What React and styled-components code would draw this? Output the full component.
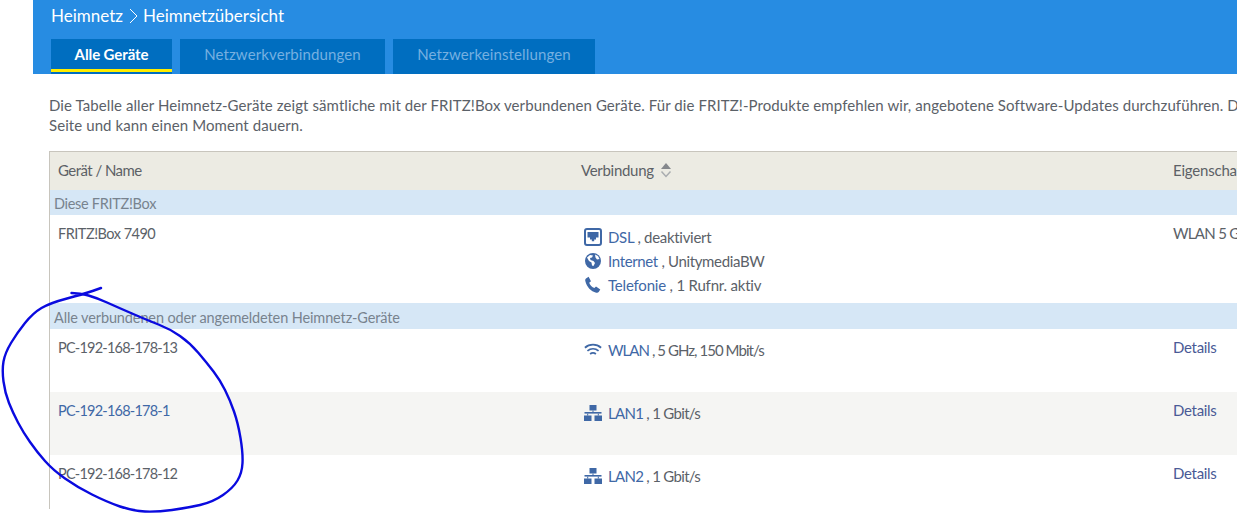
import React from 'react';
import styled, { createGlobalStyle } from 'styled-components';

const GlobalStyle = createGlobalStyle`
  html, body {
    margin: 0;
    padding: 0;
    background: #fff;
    overflow: hidden;
  }
`;

const Page = styled.div`
  position: relative;
  width: 1237px;
  height: 513px;
  overflow: hidden;
  padding-left: 33px;
  box-sizing: border-box;
  font-family: Lato, "Noto Sans", sans-serif;
  font-size: 15px;
  color: #5b6168;
`;

const Header = styled.header`
  height: 74px;
  background: #278ce2;
  padding: 0 0 0 17px;
  box-sizing: border-box;
  display: flex;
  flex-direction: column;
`;

const Crumbs = styled.div`
  height: 39px;
  padding: 5px 1px 0;
  box-sizing: border-box;
  color: #fff;
  font-size: 17px;
  line-height: 21px;
  display: flex;
  align-items: flex-start;
  gap: 4px;
`;

const Tabs = styled.nav`
  display: flex;
  gap: 8px;
  margin-left: 1px;
`;

const Tab = styled.div`
  width: ${props => props.$width}px;
  height: 35px;
  box-sizing: border-box;
  background: #006ec0;
  color: ${props => (props.$active ? '#fff' : '#76b0e0')};
  font-weight: ${props => (props.$active ? 700 : 400)};
  letter-spacing: ${props => (props.$active ? '-0.1px' : '0.12px')};
  font-size: 15px;
  line-height: 30px;
  text-align: center;
  position: relative;
  ${props => props.$active && `
    &::after {
      content: '';
      position: absolute;
      left: 0;
      right: 0;
      bottom: 2px;
      height: 3px;
      background: #ffed00;
    }
  `}
`;

const Content = styled.main`
  padding: 21px 0 0 16px;
  width: 1300px;
  box-sizing: border-box;
`;

const Intro = styled.p`
  margin: 0 0 16px;
  line-height: 20px;
  letter-spacing: 0.085px;
  white-space: nowrap;
`;

const Table = styled.div`
  border-top: 1px solid #c8c5bd;
  border-left: 1px solid #c8c5bd;
  width: 1300px;
  height: 357px;
  overflow: hidden;
`;

const Row = styled.div`
  display: grid;
  grid-template-columns: 523px 592px 1fr;
  height: ${props => props.$height}px;
  background: ${props => props.$bg || '#fff'};
  box-sizing: border-box;
`;

const Cell = styled.div`
  padding: ${props => props.$top || 9}px 0 0 8px;
  line-height: 20px;
`;

const HeadCell = styled(Cell)`
  display: flex;
  align-items: center;
  gap: 6px;
  padding-top: 0;
  padding-bottom: 3px;
  color: #5c6166;
`;

const HeadText = styled.span`
  letter-spacing: ${props => props.$spacing}px;
`;

const Band = styled.div`
  height: ${props => props.$height}px;
  box-sizing: border-box;
  background: #d6e7f6;
  color: #78838e;
  padding: ${props => props.$pad}px 0 0 4px;
  line-height: 24px;
  font-size: 14.5px;
  letter-spacing: ${props => props.$spacing}px;
`;

const DeviceName = styled.span`
  font-size: 14.500px;
  letter-spacing: ${props => props.$spacing}px;
  color: ${props => (props.$link ? '#3f68a6' : 'inherit')};
`;

const ConnList = styled.div`
  display: flex;
  flex-direction: column;
  gap: 4px;
`;

const Conn = styled.div`
  display: flex;
  align-items: center;
  height: 20px;
  gap: 6px;
`;

const ConnText = styled.span`
  letter-spacing: ${props => props.$spacing}px;
  white-space: nowrap;
`;

const IconBox = styled.span`
  width: 18px;
  margin-left: 3px;
  height: 20px;
  display: flex;
  align-items: center;
  justify-content: center;
  color: #3f68a6;
  flex: none;
`;

const Link = styled.span`
  color: #3f68a6;
`;

const DetailsLink = styled.span`
  color: #4a5a96;
  letter-spacing: -0.3px;
`;

const Scribble = styled.svg`
  position: absolute;
  left: 0;
  top: 280px;
  pointer-events: none;
`;

const DslIcon = () => (
  <svg width="18" height="18" viewBox="0 0 18 18">
    <rect x="1" y="1" width="16" height="16" rx="2" fill="none" stroke="currentColor" strokeWidth="2" />
    <path d="M3.500 4h11v5.500h-2.500v2h-1.800v1.800h-2.400v-1.800H6v-2H3.500z" fill="currentColor" />
  </svg>
);

const GlobeIcon = () => (
  <svg width="18" height="18" viewBox="0 0 18 18">
    <circle cx="9" cy="9" r="8" fill="currentColor" />
    <path d="M3 5.500l3-2.500 3 .5-1 2-2 .5 .5 2 3 1 1.500 2-1.500 3-1.500-.5-.5-3-2.500-1.500zM11 2.500l3 1.500 1.500 3-2.500.5-1.500-2z" fill="#fff" />
  </svg>
);

const PhoneIcon = () => (
  <svg width="18" height="18" viewBox="0 0 18 18">
    <path d="M2 2.500L4.600 .8l2.400 4.400-1.800 1.500c.8 2.400 2.800 4.500 5.200 5.400l1.600-1.600 4.300 3-1.600 2.600c-.6.800-1.500.9-2.500.6C7 15.500 2.800 11 1.300 5c-.2-1 0-2 .7-2.500z" fill="currentColor" />
  </svg>
);

const WifiIcon = () => (
  <svg width="20" height="16" viewBox="0 0 20 16" fill="none" stroke="currentColor" strokeWidth="2">
    <path d="M1 5.500C6 1 14 1 19 5.500" />
    <path d="M3.800 9C7.500 6 12.500 6 16.200 9" />
    <path d="M6.800 12.500C8.700 11 11.300 11 13.200 12.500" />
  </svg>
);

const LanIcon = () => (
  <svg width="18" height="16" viewBox="0 0 18 16" fill="currentColor">
    <rect x="5.500" y="0" width="7" height="5.500" />
    <rect x="8.500" y="5.500" width="1" height="1.500" />
    <rect x="0.500" y="7" width="17" height="1.600" />
    <rect x="3.200" y="8.600" width="1" height="2" />
    <rect x="13.800" y="8.600" width="1" height="2" />
    <rect x="0" y="10.500" width="7.500" height="5.500" />
    <rect x="10.500" y="10.500" width="7.500" height="5.500" />
  </svg>
);

const SortIcon = () => (
  <svg width="12" height="16" viewBox="0 0 12 16">
    <path d="M6 1l5 6H1z" fill="#85888c" />
    <path d="M1.500 9.500L6 14.500l4.500-5" fill="none" stroke="#a9acaf" strokeWidth="1.500" />
  </svg>
);

// traced from the hand drawn circle in the screenshot
const scribblePoints = [
  [101, 8], [84, 14], [50, 23], [33, 33], [17, 53], [5, 73], [2, 90], [5, 113], [13, 133],
  [23, 152], [37, 172], [53, 190], [77, 207], [107, 222], [133, 231], [157, 232], [187, 228],
  [213, 222], [233, 208], [242, 193], [243, 173], [238, 143], [230, 120], [220, 100], [207, 83],
  [190, 63], [170, 49], [147, 40], [117, 27], [97, 18], [80, 13], [63, 13],
];

const scribblePath = scribblePoints.reduce((d, [x, y], i, pts) => {
  if (i === 0) return `M${x} ${y}`;
  const [px, py] = pts[i - 1];
  return `${d} Q${px} ${py} ${(px + x) / 2} ${(py + y) / 2}`;
}, '');

const connections = [
  { icon: <DslIcon />, name: 'DSL', info: ', deaktiviert', spacing: -0.3 },
  { icon: <GlobeIcon />, name: 'Internet', info: ', UnitymediaBW', spacing: -0.35 },
  { icon: <PhoneIcon />, name: 'Telefonie', info: ', 1 Rufnr. aktiv', spacing: -0.2 },
];

const devices = [
  { name: 'PC-192-168-178-13', icon: <WifiIcon />, conn: 'WLAN', info: ', 5 GHz, 150 Mbit/s', spacing: -0.95 },
  { name: 'PC-192-168-178-1', icon: <LanIcon />, conn: 'LAN1', info: ', 1 Gbit/s', spacing: -0.7, alt: true, link: true },
  { name: 'PC-192-168-178-12', icon: <LanIcon />, conn: 'LAN2', info: ', 1 Gbit/s', spacing: -0.7 },
];

const App = () => (
  <Page>
    <GlobalStyle />
    <Header>
      <Crumbs>
        <span>Heimnetz</span>
        <svg width="12" height="21" viewBox="0 0 12 21" fill="none" stroke="#fff" strokeWidth="1">
          <path d="M3 4l7 7-7 7" />
        </svg>
        <span>Heimnetzübersicht</span>
      </Crumbs>
      <Tabs>
        <Tab $active $width={121}>Alle Geräte</Tab>
        <Tab $width={205}>Netzwerkverbindungen</Tab>
        <Tab $width={202}>Netzwerkeinstellungen</Tab>
      </Tabs>
    </Header>
    <Content>
      <Intro>
        Die Tabelle aller Heimnetz-Geräte zeigt sämtliche mit der FRITZ!Box verbundenen Geräte. Für die FRITZ!-Produkte empfehlen wir, angebotene Software-Updates durchzuführen. Die
        <br />
        Seite und kann einen Moment dauern.
      </Intro>
      <Table>
        <Row $height={38} $bg="#ecebe3">
          <HeadCell><HeadText $spacing={-0.55}>Gerät / Name</HeadText></HeadCell>
          <HeadCell><HeadText $spacing={-0.3}>Verbindung</HeadText> <SortIcon /></HeadCell>
          <HeadCell><HeadText $spacing={-0.2}>Eigenschaften</HeadText></HeadCell>
        </Row>
        <Band $height={25} $pad={2} $spacing={-0.3}>Diese FRITZ!Box</Band>
        <Row $height={88}>
          <Cell $top={8}><DeviceName $spacing={-0.5}>FRITZ!Box 7490</DeviceName></Cell>
          <Cell $top={12}>
            <ConnList>
              {connections.map(item => (
                <Conn key={item.name}>
                  <IconBox>{item.icon}</IconBox>
                  <ConnText $spacing={item.spacing}><Link>{item.name}</Link> {item.info}</ConnText>
                </Conn>
              ))}
            </ConnList>
          </Cell>
          <Cell $top={8}><ConnText $spacing={-0.7}>WLAN 5 GHz</ConnText></Cell>
        </Row>
        <Band $height={26} $pad={3} $spacing={-0.12}>Alle verbundenen oder angemeldeten Heimnetz-Geräte</Band>
        {devices.map(device => (
          <Row key={device.name} $height={63} $bg={device.alt ? '#f5f5f3' : '#fff'}>
            <Cell $top={8}><DeviceName $link={device.link} $spacing={-0.78}>{device.name}</DeviceName></Cell>
            <Cell $top={11}>
              <Conn>
                <IconBox>{device.icon}</IconBox>
                <ConnText $spacing={device.spacing}><Link>{device.conn}</Link> {device.info}</ConnText>
              </Conn>
            </Cell>
            <Cell $top={8}><DetailsLink>Details</DetailsLink></Cell>
          </Row>
        ))}
      </Table>
    </Content>
    <Scribble width="260" height="233" viewBox="0 0 260 233">
      <path d={scribblePath} fill="none" stroke="#0a0adf" strokeWidth="2.4" strokeLinecap="round" strokeLinejoin="round" />
    </Scribble>
  </Page>
);

export default App;
